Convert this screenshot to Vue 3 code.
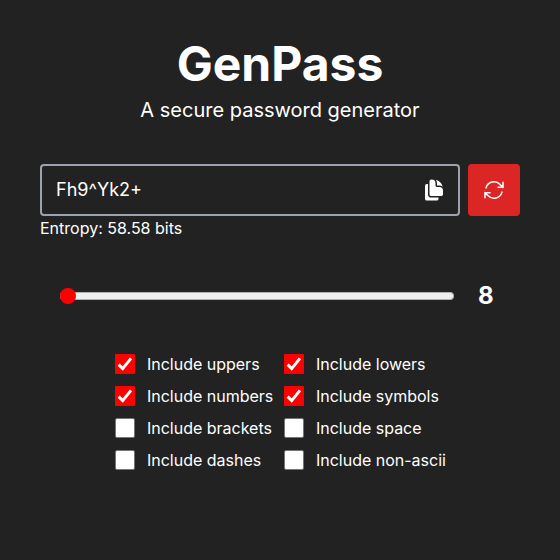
<script setup>
import { ref, reactive } from 'vue'

const password = ref('Fh9^Yk2+')
const length = ref(8)
const options = reactive([
  { name: 'uppers', on: true },
  { name: 'lowers', on: true },
  { name: 'numbers', on: true },
  { name: 'symbols', on: true },
  { name: 'brackets', on: false },
  { name: 'space', on: false },
  { name: 'dashes', on: false },
  { name: 'non-ascii', on: false },
])
</script>

<template>
  <main class="page">
    <h1 class="title">GenPass</h1>
    <p class="subtitle">A secure password generator</p>

    <div class="row">
      <div class="field">
        <span class="value">{{ password }}</span>
        <svg class="icon" viewBox="0 0 24 24" fill="currentColor">
          <path d="M7.5 3.375c0-1.036.84-1.875 1.875-1.875h.375a3.75 3.75 0 013.75 3.75v1.875C13.5 8.161 14.34 9 15.375 9h1.875A3.75 3.75 0 0121 12.75v3.375C21 17.16 20.16 18 19.125 18h-9.75A1.875 1.875 0 017.5 16.125V3.375z" />
          <path d="M15 5.25a5.23 5.23 0 00-1.279-3.434 9.768 9.768 0 016.963 6.963A5.23 5.23 0 0017.25 7.5h-1.875A.375.375 0 0115 7.125V5.25zM4.875 6H6v10.125A3.375 3.375 0 009.375 19.5H16.5v1.125c0 1.035-.84 1.875-1.875 1.875h-9.75A1.875 1.875 0 013 20.625V7.875C3 6.839 3.84 6 4.875 6z" />
        </svg>
      </div>
      <button class="refresh" type="button">
        <svg class="icon" viewBox="0 0 24 24" fill="none" stroke="currentColor" stroke-width="1.5" stroke-linecap="round" stroke-linejoin="round">
          <path d="M16.023 9.348h4.992v-.001M2.985 19.644v-4.992m0 0h4.992m-4.993 0l3.181 3.183a8.25 8.25 0 0013.803-3.7M4.031 9.865a8.25 8.25 0 0113.803-3.7l3.181 3.182m0-4.991v4.99" />
        </svg>
      </button>
    </div>
    <p class="entropy">Entropy: 58.58 bits</p>

    <div class="length">
      <input v-model.number="length" class="slider" type="range" min="8" max="64" />
      <span class="count">{{ length }}</span>
    </div>

    <div class="options">
      <label v-for="o in options" :key="o.name" class="option">
        <input v-model="o.on" class="native" type="checkbox" />
        <span class="box" :class="{ checked: o.on }">
          <svg v-if="o.on" viewBox="0 0 20 20" fill="none" stroke="#fff" stroke-width="3">
            <path d="M3.7 10.6l4 4L16 4.4" />
          </svg>
        </span>
        <span>Include {{ o.name }}</span>
      </label>
    </div>
  </main>
</template>

<style>
body {
  margin: 0;
  background: #222;
}
</style>

<style scoped>
.page {
  box-sizing: border-box;
  min-height: 560px;
  padding: 40px;
  background: #222;
  color: #fff;
  font: 16px/24px Inter, sans-serif;
}
.title {
  margin: 0;
  font-size: 48px;
  line-height: 48px;
  font-weight: 700;
  text-align: center;
}
.subtitle {
  margin: 8px 0 40px;
  font-size: 20px;
  line-height: 28px;
  text-align: center;
}
.row {
  display: flex;
  gap: 8px;
}
.field {
  box-sizing: border-box;
  flex: 1;
  height: 52px;
  display: flex;
  align-items: center;
  justify-content: space-between;
  padding: 0 12px 0 14px;
  border: 2px solid #9ca3af;
  border-radius: 4px;
}
.value {
  font-size: 18px;
  line-height: 28px;
}
.icon {
  display: block;
  width: 24px;
  height: 24px;
}
.refresh {
  display: flex;
  align-items: center;
  justify-content: center;
  width: 52px;
  height: 52px;
  padding: 0;
  border: 0;
  border-radius: 4px;
  background: #dc2626;
  color: #fff;
}
.entropy {
  margin: 0;
}
.length {
  display: flex;
  align-items: center;
  height: 32px;
  margin-top: 40px;
  padding-left: 20px;
}
.slider {
  appearance: none;
  width: 394px;
  height: 16px;
  margin: 0;
  background: none;
}
.slider::-webkit-slider-runnable-track {
  box-sizing: border-box;
  height: 8px;
  border: 1px solid #b2b2b2;
  border-left: 0;
  border-radius: 4px;
  background: #efefef;
}
.slider::-webkit-slider-thumb {
  appearance: none;
  width: 16px;
  height: 16px;
  margin-top: -5px;
  border-radius: 50%;
  background: #f00;
}
.count {
  margin-left: 24px;
  font-size: 24px;
  line-height: 32px;
  font-weight: 700;
}
.options {
  display: grid;
  grid-template-columns: 157px 161px;
  justify-content: center;
  gap: 8px 12px;
  margin-top: 40px;
}
.option {
  display: flex;
  align-items: center;
  gap: 12px;
  letter-spacing: -0.01px;
  white-space: nowrap;
}
.native {
  display: none;
}
.box {
  box-sizing: border-box;
  flex: none;
  width: 20px;
  height: 20px;
  border: 1px solid #767676;
  border-radius: 2px;
  background: #fff;
}
.box.checked {
  border: 0;
  border-radius: 1px;
  background: #f00;
}
.box svg {
  display: block;
}
</style>
